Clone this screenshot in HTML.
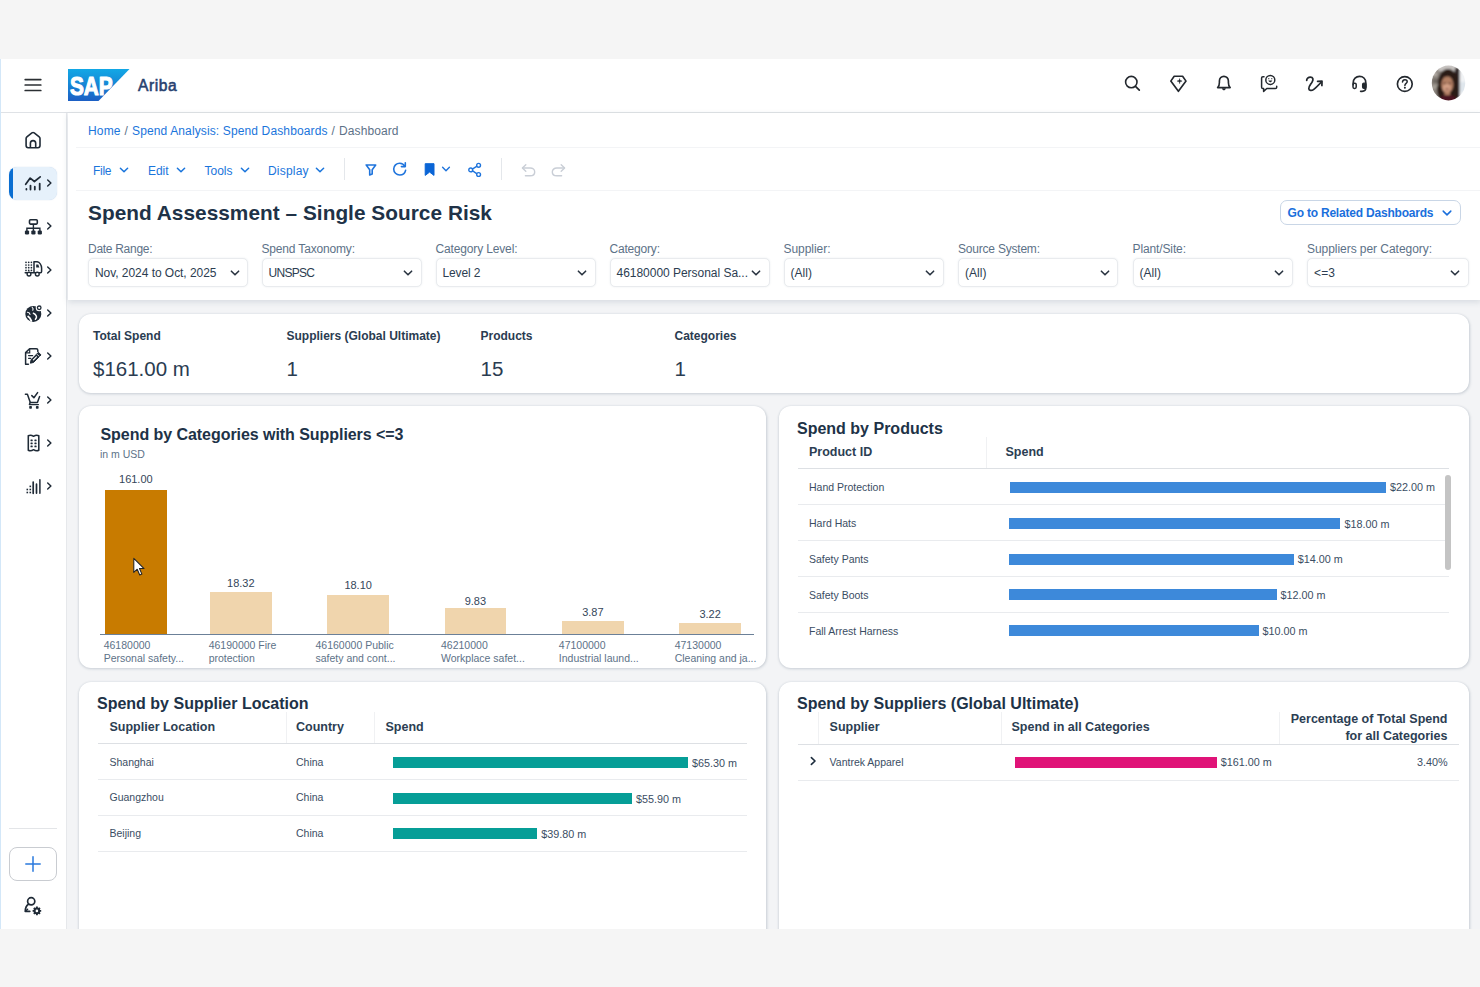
<!DOCTYPE html>
<html lang="en"><head><meta charset="utf-8"><title>SAP Ariba – Spend Assessment – Single Source Risk</title>
<style>
html,body{margin:0;padding:0}
body{width:1480px;height:987px;background:#f5f5f5;position:relative;overflow:hidden;font-family:"Liberation Sans", Arial, sans-serif;}
#app{position:absolute;left:0;top:0;width:1480px;height:929px;overflow:hidden;background:#f3f4f6}
.t{position:absolute;white-space:nowrap;line-height:1;font-family:"Liberation Sans", Arial, sans-serif;}
.card{position:absolute;background:#fff;border-radius:12px;box-shadow:0 0 2px rgba(85,107,130,.16),.5px 1px 3px rgba(70,90,110,.20)}
.sel{position:absolute;background:#fff;border:1px solid #e9ebee;border-radius:5px;box-sizing:border-box;box-shadow:0 0 2px rgba(85,107,130,.12)}
.hl{position:absolute;height:1px;background:#e9ebee}
.vl{position:absolute;width:1px;background:#f0f1f3}
</style></head><body>
<div id="app">
<div style="position:absolute;left:0px;top:58.5px;width:1480px;height:53.5px;background:#fff;"></div>
<div style="position:absolute;left:0px;top:111.5px;width:1480px;height:1.5px;background:#dfe2e6;"></div>
<div style="position:absolute;left:0px;top:113px;width:66px;height:816px;background:#fff;"></div>
<div style="position:absolute;left:66px;top:113px;width:1.2px;height:816px;background:#e6e8eb;"></div>
<div style="position:absolute;left:0px;top:58.5px;width:1.3px;height:871px;background:#d3e7f8;"></div>
<div style="position:absolute;left:67.5px;top:113px;width:1413px;height:187px;background:#fff;box-shadow:0 2px 6px rgba(85,107,130,.18);"></div>
<svg style="position:absolute;left:24px;top:76px;" width="18" height="18" viewBox="0 0 18 18" fill="none"><path d="M1.2 3.6H16.8M1.2 9H16.8M1.2 14.5H16.8" stroke="#2b2f33" stroke-width="1.7" stroke-linecap="round"/></svg>
<svg style="position:absolute;left:68px;top:69px;" width="62" height="32" viewBox="0 0 62 32" fill="none"><defs><linearGradient id="sapg" x1="0" y1="0" x2="0" y2="1"><stop offset="0" stop-color="#12a8e6"/><stop offset=".25" stop-color="#1497dd"/><stop offset="1" stop-color="#1c5fc4"/></linearGradient></defs>
<path d="M0 0H61.5L30.5 32H0Z" fill="url(#sapg)"/>
<text x="1.9" y="25.7" font-family="Liberation Sans, Arial, sans-serif" font-weight="700" font-size="26.2" fill="#fff" textLength="42.8" lengthAdjust="spacingAndGlyphs" stroke="#fff" stroke-width="1.15" stroke-linejoin="round">SAP</text></svg>
<span class="t" style="left:138.00px;top:77.79px;font-size:15.6px;color:#27416f;letter-spacing:0.545px;-webkit-text-stroke:.55px #27416f;">Ariba</span>
<svg style="position:absolute;left:1122px;top:73px;" width="20" height="20" viewBox="0 0 20 20" fill="none"><circle cx="9.3" cy="9.1" r="5.7" stroke="#23282e" stroke-width="1.6"/><path d="M13.5 13.3L17.3 17.1" stroke="#23282e" stroke-width="1.7" stroke-linecap="round"/></svg>
<svg style="position:absolute;left:1168px;top:73px;" width="22" height="22" viewBox="0 0 22 22" fill="none"><path d="M6.2 3.2H14.6L18 8.1L10.4 18.3L2.8 8.1Z" stroke="#23282e" stroke-width="1.65" stroke-linejoin="round"/><path d="M11.6 5.6C11.8 7.4 12.3 7.9 14.1 8.1C12.3 8.3 11.8 8.8 11.6 10.6C11.4 8.8 10.9 8.3 9.1 8.1C10.9 7.9 11.4 7.4 11.6 5.6Z" fill="#23282e" stroke="#23282e" stroke-width=".5"/></svg>
<svg style="position:absolute;left:1213px;top:73px;" width="22" height="22" viewBox="0 0 22 22" fill="none"><path d="M4.6 14.6H17.2C15.6 13.4 15.4 12 15.4 9.4V8C15.4 5.2 13.4 3.3 10.9 3.3C8.4 3.3 6.4 5.2 6.4 8V9.4C6.4 12 6.2 13.4 4.6 14.6Z" stroke="#23282e" stroke-width="1.65" stroke-linejoin="round"/><path d="M8.9 15.2C9.3 16.6 10 17.2 10.9 17.2C11.8 17.2 12.5 16.6 12.9 15.2Z" fill="#23282e"/></svg>
<svg style="position:absolute;left:1258px;top:72px;" width="22" height="22" viewBox="0 0 22 22" fill="none"><path d="M6 4.7H4.9C4.1 4.7 3.6 5.3 3.6 6V15.2C3.6 15.9 4.1 16.5 4.9 16.5H5.6V19.4L8.8 16.5H17.4C18.2 16.500 18.7 15.9 18.7 15.2V14.2" stroke="#23282e" stroke-width="1.5" stroke-linecap="round" stroke-linejoin="round"/><circle cx="12.3" cy="7.9" r="4.5" stroke="#23282e" stroke-width="1.5"/><path d="M10.3 8.6C10.8 9.9 11.6 10.2 12.3 10.2C13 10.2 13.8 9.9 14.3 8.6Z" fill="#23282e"/><circle cx="10.8" cy="6.7" r=".6" fill="#23282e"/><circle cx="13.8" cy="6.7" r=".6" fill="#23282e"/></svg>
<svg style="position:absolute;left:1303px;top:73px;" width="22" height="22" viewBox="0 0 22 22" fill="none"><path d="M3.700 7.400C3.500 5.800 5.300 4 7.400 4C10 4 10.600 6.400 9.200 8.900C7.800 11.400 5.600 13.400 5.800 15.600C6 17.800 8.600 18.100 10.800 16.400C13.200 14.500 15.800 11.800 18.400 9" stroke="#23282e" stroke-width="1.750" stroke-linecap="round" stroke-linejoin="round"/><path d="M14.600 8.300L19 8.200L18.900 12.500" stroke="#23282e" stroke-width="1.750" stroke-linecap="round" stroke-linejoin="round"/></svg>
<svg style="position:absolute;left:1349px;top:73px;" width="22" height="22" viewBox="0 0 22 22" fill="none"><path d="M4.2 11.8V9.800C4.2 5.9 7 3.4 10.500 3.4C14 3.4 16.8 5.9 16.8 9.800V14.8C16.8 17 15.400 18.3 13 18.3H11.6" stroke="#23282e" stroke-width="1.65" stroke-linecap="round" stroke-linejoin="round"/><rect x="4" y="10.200" width="3.200" height="5.200" rx="1.3" stroke="#23282e" stroke-width="1.5"/><rect x="13.600" y="10.200" width="3.400" height="5.200" rx="1.3" fill="#23282e" stroke="#23282e" stroke-width="1.3"/></svg>
<svg style="position:absolute;left:1394px;top:72.5px;" width="22" height="22" viewBox="0 0 22 22" fill="none"><circle cx="10.800" cy="11" r="7.400" stroke="#23282e" stroke-width="1.65"/><path d="M8.500 9C8.600 7.600 9.600 6.800 10.900 6.800C12.200 6.800 13.200 7.600 13.200 8.800C13.200 10.400 10.900 10.500 10.900 12.400" stroke="#23282e" stroke-width="1.5" stroke-linecap="round"/><circle cx="10.900" cy="14.800" r="1" fill="#23282e"/></svg>
<svg style="position:absolute;left:1430px;top:64px;" width="37" height="38" viewBox="0 0 37 38" fill="none"><defs><clipPath id="avc"><ellipse cx="18.5" cy="19" rx="16.700" ry="17.400"/></clipPath><filter id="avb" x="-10%" y="-10%" width="120%" height="120%"><feGaussianBlur stdDeviation=".85"/></filter><filter id="ave" x="-10%" y="-10%" width="120%" height="120%"><feGaussianBlur stdDeviation=".35"/></filter></defs>
<g filter="url(#ave)"><g clip-path="url(#avc)"><g filter="url(#avb)"><rect x="-2" y="-2" width="42" height="42" fill="#8a837d"/><rect x="2" y="8" width="5" height="4" fill="#b3aca4"/><rect x="3" y="15" width="5" height="4" fill="#6d6660"/><rect x="2" y="21" width="6" height="4" fill="#a39c94"/><rect x="8" y="-2" width="18" height="9" fill="#c6c2c0"/><rect x="28.500" y="-2" width="12" height="42" fill="#f1f3f5"/><rect x="30" y="18" width="8" height="10" fill="#dfe6ec"/>
<path d="M25 4H29.500V34H24Z" fill="#2a2123"/>
<ellipse cx="18" cy="19.500" rx="10.200" ry="14.500" fill="#2b1a16"/><path d="M7 22C6.500 28 8 33 10 36H27C28.500 32 29 27 28.500 22Z" fill="#2b1a16"/>
<ellipse cx="17.300" cy="20.600" rx="6" ry="8.300" fill="#b27f64"/><ellipse cx="16.800" cy="24" rx="4" ry="4.200" fill="#d29f84"/><ellipse cx="14.600" cy="19.300" rx="1.700" ry=".9" fill="#6b4637"/><ellipse cx="19.800" cy="19.300" rx="1.700" ry=".9" fill="#6b4637"/><ellipse cx="17.100" cy="25.300" rx="2.300" ry=".75" fill="#8a5648"/><rect x="14.500" y="27.500" width="5.500" height="4" fill="#b07e64"/>
<path d="M12 13.500C13.500 9.500 20 8.500 23 13C20 11.800 15.500 11.800 12 13.500Z" fill="#2b1a16"/>
<path d="M8 40C9 32.500 13 30.600 17.500 31.200C22.500 30.600 27 32.500 28.500 40Z" fill="#4c1820"/></g></g></g></svg>
<div style="position:absolute;left:9.3px;top:166.5px;width:47.5px;height:33px;border-radius:8px;background:#e6f1fb;overflow:hidden;box-shadow:0 0 1px rgba(120,160,210,.5)"><div style="position:absolute;left:0;top:0;width:3.3px;height:33px;background:#0a6ed1"></div></div>
<svg style="position:absolute;left:24px;top:130.5px;" width="18" height="18" viewBox="0 0 18 18" fill="none"><path d="M2.1 7.6C2.1 6.9 2.4 6.3 2.9 5.9L7.9 1.9C8.6 1.4 9.5 1.4 10.2 1.9L15.2 5.9C15.7 6.3 16 6.9 16 7.6V14.6C16 15.8 15.1 16.7 13.9 16.7H4.2C3 16.7 2.1 15.8 2.1 14.6Z" stroke="#1f2a36" stroke-width="1.6" stroke-linejoin="round"/><path d="M6.4 16.6V12.3C6.4 10.8 7.6 9.6 9.05 9.6C10.5 9.6 11.7 10.8 11.7 12.3V16.6" stroke="#1f2a36" stroke-width="1.6"/></svg>
<svg style="position:absolute;left:24px;top:174px;" width="19" height="18" viewBox="0 0 19 18" fill="none"><path d="M1.700 10.300L6.200 4.100L10.400 7.500L16.200 2.900" stroke="#1f2a36" stroke-width="1.750" stroke-linecap="round" stroke-linejoin="round"/><path d="M2.400 15V15.600M6.500 11.600V15.600M10.800 12.700V15.600M15.700 9.600V15.600" stroke="#1f2a36" stroke-width="1.800" stroke-linecap="round"/></svg>
<svg style="position:absolute;left:43px;top:177.2px;" width="12" height="12" viewBox="0 0 12 12" fill="none"><path d="M4.700 2.900L7.900 6L4.700 9.100" stroke="#1f2a36" stroke-width="1.450" stroke-linecap="round" stroke-linejoin="round"/></svg>
<svg style="position:absolute;left:23.5px;top:217.5px;" width="19" height="18" viewBox="0 0 19 18" fill="none"><rect x="5.500" y="1.800" width="7.800" height="4.300" rx="1" stroke="#1f2a36" stroke-width="1.600"/><path d="M9.4 6.200V10M2.9 13V10.2H15.9V13M9.4 10V13" stroke="#1f2a36" stroke-width="1.4"/><rect x="0.9" y="12.4" width="4.2" height="4" rx="1.2" fill="#1f2a36"/><rect x="7.3" y="12.4" width="4.2" height="4" rx="1.2" fill="#1f2a36"/><rect x="13.7" y="12.4" width="4.2" height="4" rx="1.2" fill="#1f2a36"/></svg>
<svg style="position:absolute;left:43px;top:220.4px;" width="12" height="12" viewBox="0 0 12 12" fill="none"><path d="M4.700 2.900L7.900 6L4.700 9.100" stroke="#1f2a36" stroke-width="1.450" stroke-linecap="round" stroke-linejoin="round"/></svg>
<svg style="position:absolute;left:23.5px;top:259.9px;" width="19" height="18" viewBox="0 0 19 18" fill="none"><g fill="#1f2a36"><circle cx="2" cy="2.3" r=".85"/><circle cx="4.7" cy="2.3" r=".85"/><circle cx="7.4" cy="2.3" r=".85"/><circle cx="2" cy="5" r=".85"/><circle cx="4.7" cy="5" r=".85"/><circle cx="7.4" cy="5" r=".85"/><circle cx="2" cy="7.7" r=".85"/><circle cx="4.7" cy="7.7" r=".85"/><circle cx="7.4" cy="7.7" r=".85"/><circle cx="2" cy="10.4" r=".85"/><circle cx="4.7" cy="10.4" r=".85"/><circle cx="7.4" cy="10.4" r=".85"/></g><path d="M10 1.8H13.2C15.6 2.3 17.4 5.2 17.6 8V11.6C17.6 12.3 17.2 12.7 16.5 12.7H1.2" stroke="#1f2a36" stroke-width="1.5" stroke-linecap="round" stroke-linejoin="round"/><path d="M10 1.8V12.4" stroke="#1f2a36" stroke-width="1.5"/><path d="M12.2 4.6H14.3L15.4 7.4H12.2Z" fill="#1f2a36"/><circle cx="5" cy="14.1" r="1.9" fill="#fff" stroke="#1f2a36" stroke-width="1.4"/><circle cx="13.3" cy="14.1" r="1.9" fill="#fff" stroke="#1f2a36" stroke-width="1.4"/></svg>
<svg style="position:absolute;left:43px;top:263.7px;" width="12" height="12" viewBox="0 0 12 12" fill="none"><path d="M4.700 2.900L7.900 6L4.700 9.100" stroke="#1f2a36" stroke-width="1.450" stroke-linecap="round" stroke-linejoin="round"/></svg>
<svg style="position:absolute;left:23.5px;top:303.5px;" width="19" height="19" viewBox="0 0 19 19" fill="none"><circle cx="9.300" cy="9.900" r="8" fill="#1f2a36"/><path d="M4.200 12.600C5.600 13.600 6.600 15 7.300 16.800" stroke="#fff" stroke-width="1.900" stroke-linecap="round"/><path d="M3.400 8.200C4.800 8.400 5.800 9.200 6 10.400" stroke="#fff" stroke-width="1.100" stroke-linecap="round"/><path d="M9.400 9.200C10.800 9.600 11.800 10.600 12.400 12.200C12.800 13.400 12.200 14.400 11.400 15.200" stroke="#fff" stroke-width="1.500" stroke-linecap="round"/><path d="M8.200 3.400C9.200 4.200 9.400 5.200 8.800 6.200" stroke="#fff" stroke-width="1.100" stroke-linecap="round"/><circle cx="15.200" cy="3.800" r="3.500" fill="#fff"/><circle cx="15.200" cy="3.800" r="1.800" stroke="#1f2a36" stroke-width="1.300"/></svg>
<svg style="position:absolute;left:43px;top:307px;" width="12" height="12" viewBox="0 0 12 12" fill="none"><path d="M4.700 2.900L7.900 6L4.700 9.100" stroke="#1f2a36" stroke-width="1.450" stroke-linecap="round" stroke-linejoin="round"/></svg>
<svg style="position:absolute;left:23.5px;top:347px;" width="19" height="19" viewBox="0 0 19 19" fill="none"><path d="M1.6 17V5.6L5.6 1.7H12.3C13.2 1.7 13.8 2.3 13.8 3.2V4.4" stroke="#1f2a36" stroke-width="1.5" stroke-linecap="round" stroke-linejoin="round"/><path d="M1.6 17.3H4.4" stroke="#1f2a36" stroke-width="1.5" stroke-linecap="round"/><path d="M1.8 5.9H5.7V2" stroke="#1f2a36" stroke-width="1.2"/><path d="M4.6 8.6H8.6M4.6 11.3H6.8" stroke="#1f2a36" stroke-width="1.3" stroke-linecap="round"/><path d="M14.4 5.3L17 7.9L9.6 15.4L6.4 16.2L7.1 12.8Z" fill="#1f2a36" stroke="#1f2a36" stroke-width="1" stroke-linejoin="round"/><path d="M13 7.2L15.2 9.4" stroke="#fff" stroke-width=".9"/><path d="M12.400 9.800L9.400 12.900" stroke="#fff" stroke-width="1.200" stroke-linecap="round"/></svg>
<svg style="position:absolute;left:43px;top:350.2px;" width="12" height="12" viewBox="0 0 12 12" fill="none"><path d="M4.700 2.900L7.900 6L4.700 9.100" stroke="#1f2a36" stroke-width="1.450" stroke-linecap="round" stroke-linejoin="round"/></svg>
<svg style="position:absolute;left:23.5px;top:390.5px;" width="19" height="19" viewBox="0 0 19 19" fill="none"><path d="M1.4 3.3H3.4L6.3 11.4H13.4L15.6 5.6" stroke="#1f2a36" stroke-width="1.5" stroke-linecap="round" stroke-linejoin="round"/><path d="M6.2 11.4L5.4 13.6H14.4" stroke="#1f2a36" stroke-width="1.4" stroke-linecap="round" stroke-linejoin="round"/><path d="M7.8 4.6L9.9 6.7L13.6 1.6" stroke="#1f2a36" stroke-width="1.5" stroke-linecap="round" stroke-linejoin="round"/><rect x="5.2" y="15" width="2.7" height="2.7" rx=".7" fill="#1f2a36"/><rect x="11.9" y="15" width="2.7" height="2.7" rx=".7" fill="#1f2a36"/></svg>
<svg style="position:absolute;left:43px;top:393.7px;" width="12" height="12" viewBox="0 0 12 12" fill="none"><path d="M4.700 2.900L7.900 6L4.700 9.100" stroke="#1f2a36" stroke-width="1.450" stroke-linecap="round" stroke-linejoin="round"/></svg>
<svg style="position:absolute;left:23.5px;top:434px;" width="19" height="19" viewBox="0 0 19 19" fill="none"><path d="M4.300 1.700C6 .9 7.700 1.100 9.550 2.300C11.400 1.100 13.100 .9 14.800 1.700V16.300C13.100 17.100 11.400 16.900 9.550 15.700C7.700 16.900 6 17.100 4.300 16.300Z" stroke="#1f2a36" stroke-width="1.550" stroke-linejoin="round"/><g fill="#1f2a36"><rect x="6.500" y="5.500" width="2.200" height="1.700" rx=".4"/><rect x="10.400" y="5.500" width="2.200" height="1.700" rx=".4"/><rect x="6.500" y="8.500" width="2.200" height="1.700" rx=".4"/><rect x="10.400" y="8.500" width="2.200" height="1.700" rx=".4"/><rect x="6.500" y="11.600" width="2.200" height="1.700" rx=".4"/><rect x="10.400" y="11.600" width="2.200" height="1.700" rx=".4"/></g></svg>
<svg style="position:absolute;left:43px;top:437.2px;" width="12" height="12" viewBox="0 0 12 12" fill="none"><path d="M4.700 2.900L7.900 6L4.700 9.100" stroke="#1f2a36" stroke-width="1.450" stroke-linecap="round" stroke-linejoin="round"/></svg>
<svg style="position:absolute;left:23.5px;top:477.5px;" width="19" height="18" viewBox="0 0 19 18" fill="none"><path d="M15.900 1.800V15.300" stroke="#1f2a36" stroke-width="1.500" stroke-linecap="round"/><path d="M12.500 6.200V15.100M9.200 4V15.300" stroke="#1f2a36" stroke-width="1.700" stroke-linecap="round"/><g fill="#1f2a36"><rect x="5.500" y="7.600" width="1.600" height="1.600"/><rect x="5.500" y="10.700" width="1.600" height="1.600"/><rect x="5.500" y="13.700" width="1.600" height="1.600"/><rect x="2.500" y="10.700" width="1.600" height="1.600"/><rect x="2.500" y="13.700" width="1.600" height="1.600"/></g></svg>
<svg style="position:absolute;left:43px;top:480.3px;" width="12" height="12" viewBox="0 0 12 12" fill="none"><path d="M4.700 2.900L7.900 6L4.700 9.100" stroke="#1f2a36" stroke-width="1.450" stroke-linecap="round" stroke-linejoin="round"/></svg>
<div style="position:absolute;left:9px;top:827.5px;width:47.5px;height:1px;background:#e3e5e8;"></div>
<div style="position:absolute;left:9px;top:846.5px;width:48px;height:34.5px;box-sizing:border-box;border:1px solid #c9ccd1;border-radius:8px;background:#fff;"></div>
<svg style="position:absolute;left:24px;top:855px;" width="18" height="18" viewBox="0 0 18 18" fill="none"><path d="M9 1.8V16.2M1.8 9H16.2" stroke="#2a79dd" stroke-width="1.5" stroke-linecap="round"/></svg>
<svg style="position:absolute;left:23px;top:896px;" width="20" height="20" viewBox="0 0 20 20" fill="none"><circle cx="8.2" cy="5.3" r="3.6" stroke="#1f2a36" stroke-width="1.7"/><path d="M5.5 8.300C3.300 9.700 2.300 12 2.300 15.300H6.800" stroke="#1f2a36" stroke-width="1.700" stroke-linecap="round" stroke-linejoin="round"/><path d="M4.600 13.300L2.500 15.200" stroke="#1f2a36" stroke-width="1.500" stroke-linecap="round"/><g transform="translate(13.900 14.900)"><circle r="2.300" stroke="#1f2a36" stroke-width="2"/><path d="M0 -4.300V-2.800M0 4.300V2.800M-4.300 0H-2.800M4.300 0H2.800M-3.040 -3.040L-2 -2M3.040 3.040L2 2M-3.040 3.040L-2 2M3.040 -3.040L2 -2" stroke="#1f2a36" stroke-width="1.900"/></g></svg>
<span class="t" style="left:88.00px;top:124.84px;font-size:12px;color:#1a75dc;letter-spacing:0.163px;">Home</span>
<span class="t" style="left:124.50px;top:124.84px;font-size:12px;color:#5d7288;">/</span>
<span class="t" style="left:132.00px;top:124.84px;font-size:12px;color:#1a75dc;letter-spacing:0.130px;">Spend Analysis: Spend Dashboards</span>
<span class="t" style="left:331.50px;top:124.84px;font-size:12px;color:#5d7288;">/</span>
<span class="t" style="left:339.00px;top:124.84px;font-size:12px;color:#5d7288;letter-spacing:0.099px;">Dashboard</span>
<div class="hl" style="left:76px;top:147px;width:1404px;background:#f3f4f6"></div>
<span class="t" style="left:93.00px;top:164.84px;font-size:12px;color:#1a75dc;letter-spacing:-0.279px;">File</span>
<svg style="position:absolute;left:117.5px;top:163.5px;" width="12" height="12" viewBox="0 0 12 12" fill="none"><path d="M2.4 4.2L6 7.8L9.6 4.2" stroke="#1a75dc" stroke-width="1.5" stroke-linecap="round" stroke-linejoin="round"/></svg>
<span class="t" style="left:148.00px;top:164.84px;font-size:12px;color:#1a75dc;letter-spacing:-0.059px;">Edit</span>
<svg style="position:absolute;left:174.5px;top:163.5px;" width="12" height="12" viewBox="0 0 12 12" fill="none"><path d="M2.4 4.2L6 7.8L9.6 4.2" stroke="#1a75dc" stroke-width="1.5" stroke-linecap="round" stroke-linejoin="round"/></svg>
<span class="t" style="left:204.50px;top:164.84px;font-size:12px;color:#1a75dc;letter-spacing:-0.004px;">Tools</span>
<svg style="position:absolute;left:238.5px;top:163.5px;" width="12" height="12" viewBox="0 0 12 12" fill="none"><path d="M2.4 4.2L6 7.8L9.6 4.2" stroke="#1a75dc" stroke-width="1.5" stroke-linecap="round" stroke-linejoin="round"/></svg>
<span class="t" style="left:268.00px;top:164.84px;font-size:12px;color:#1a75dc;letter-spacing:0.192px;">Display</span>
<svg style="position:absolute;left:314px;top:163.5px;" width="12" height="12" viewBox="0 0 12 12" fill="none"><path d="M2.4 4.2L6 7.8L9.6 4.2" stroke="#1a75dc" stroke-width="1.5" stroke-linecap="round" stroke-linejoin="round"/></svg>
<div class="vl" style="left:344px;top:158px;height:22px;background:#e4e7eb"></div>
<div class="vl" style="left:501px;top:158px;height:22px;background:#e4e7eb"></div>
<svg style="position:absolute;left:362px;top:160.5px;" width="18" height="18" viewBox="0 0 18 18" fill="none"><path d="M4.2 4H13.7L10.2 8.700V13L7.700 14V8.700Z" stroke="#1f74dc" stroke-width="1.6" stroke-linejoin="round"/></svg>
<svg style="position:absolute;left:390px;top:160px;" width="19" height="19" viewBox="0 0 19 19" fill="none"><path d="M14.900 6.300C13.900 4.400 12 3.200 9.700 3.200C6.400 3.200 3.700 5.800 3.700 9.100C3.700 12.400 6.400 15 9.700 15C12.600 15 15 13 15.600 10.300" stroke="#1f74dc" stroke-width="1.6" stroke-linecap="round"/><path d="M15.300 2.700V6.600H11.400" stroke="#1f74dc" stroke-width="1.6" stroke-linecap="round" stroke-linejoin="round"/></svg>
<svg style="position:absolute;left:421px;top:160px;" width="18" height="19" viewBox="0 0 18 19" fill="none"><path d="M4.200 3.700H13.000V15.400L8.600 12.100L4.200 15.400Z" fill="#0a65d6" stroke="#0a65d6" stroke-width="1" stroke-linejoin="round"/></svg>
<svg style="position:absolute;left:439.6px;top:163.2px;" width="12" height="12" viewBox="0 0 12 12" fill="none"><path d="M2.6 4.3L6 7.7L9.4 4.3" stroke="#1f74dc" stroke-width="1.4" stroke-linecap="round" stroke-linejoin="round"/></svg>
<svg style="position:absolute;left:466px;top:160.5px;" width="18" height="18" viewBox="0 0 18 18" fill="none"><path d="M11.800 4.600L5.200 8.900L11.800 13.300" stroke="#1f74dc" stroke-width="1.4" stroke-linejoin="round"/><circle cx="12.600" cy="4.300" r="1.900" fill="#fff" stroke="#1f74dc" stroke-width="1.4"/><circle cx="4.700" cy="8.900" r="1.900" fill="#fff" stroke="#1f74dc" stroke-width="1.4"/><circle cx="12.600" cy="13.500" r="1.900" fill="#fff" stroke="#1f74dc" stroke-width="1.4"/></svg>
<svg style="position:absolute;left:519px;top:160.5px;" width="19" height="18" viewBox="0 0 19 18" fill="none"><path d="M3.600 7H11.200C13.800 7 15.700 8.700 15.700 10.900C15.700 13.100 13.800 14.700 11.200 14.700H6.400" stroke="#c9ced6" stroke-width="1.4" stroke-linecap="round"/><path d="M6.800 3.800L3.400 7L6.800 10.200" stroke="#c9ced6" stroke-width="1.400" stroke-linecap="round" stroke-linejoin="round"/></svg>
<svg style="position:absolute;left:548.5px;top:160.5px;" width="19" height="18" viewBox="0 0 19 18" fill="none"><path d="M15.400 7H7.800C5.200 7 3.300 8.700 3.300 10.900C3.300 13.100 5.200 14.700 7.800 14.700H12.600" stroke="#c9ced6" stroke-width="1.400" stroke-linecap="round"/><path d="M12.200 3.800L15.600 7L12.200 10.200" stroke="#c9ced6" stroke-width="1.400" stroke-linecap="round" stroke-linejoin="round"/></svg>
<div class="hl" style="left:76px;top:190px;width:1404px;background:#f3f4f6"></div>
<span class="t" style="left:88.00px;top:202.69px;font-size:20.8px;font-weight:700;color:#203247;letter-spacing:0.037px;">Spend Assessment – Single Source Risk</span>
<div style="position:absolute;left:1280px;top:200px;width:181px;height:25px;box-sizing:border-box;border:1px solid #c9d6e6;border-radius:7px;background:#fff;"></div>
<span class="t" style="left:1287.50px;top:206.84px;font-size:12px;font-weight:700;color:#1a6fdc;letter-spacing:-0.204px;">Go to Related Dashboards</span>
<svg style="position:absolute;left:1440.6px;top:206.6px;" width="12" height="12" viewBox="0 0 12 12" fill="none"><path d="M2.2 4.1L6 7.9L9.8 4.1" stroke="#1a6fdc" stroke-width="1.5" stroke-linecap="round" stroke-linejoin="round"/></svg>
<span class="t" style="left:88.00px;top:242.84px;font-size:12px;color:#5d7288;letter-spacing:-0.288px;">Date Range:</span>
<div class="sel" style="left:88.0px;top:258px;width:160.3px;height:28.800px"></div>
<span class="t" style="left:95.00px;top:266.64px;font-size:12px;color:#2c3d51;letter-spacing:-0.049px;">Nov, 2024 to Oct, 2025</span>
<svg style="position:absolute;left:228.7px;top:266.6px;" width="12" height="12" viewBox="0 0 12 12" fill="none"><path d="M2.4 4.2L6 7.8L9.6 4.2" stroke="#2a3441" stroke-width="1.6" stroke-linecap="round" stroke-linejoin="round"/></svg>
<span class="t" style="left:261.50px;top:242.84px;font-size:12px;color:#5d7288;letter-spacing:-0.167px;">Spend Taxonomy:</span>
<div class="sel" style="left:261.5px;top:258px;width:160.3px;height:28.800px"></div>
<span class="t" style="left:268.50px;top:266.64px;font-size:12px;color:#2c3d51;letter-spacing:-0.702px;">UNSPSC</span>
<svg style="position:absolute;left:402.2px;top:266.6px;" width="12" height="12" viewBox="0 0 12 12" fill="none"><path d="M2.4 4.2L6 7.8L9.6 4.2" stroke="#2a3441" stroke-width="1.6" stroke-linecap="round" stroke-linejoin="round"/></svg>
<span class="t" style="left:435.50px;top:242.84px;font-size:12px;color:#5d7288;letter-spacing:-0.146px;">Category Level:</span>
<div class="sel" style="left:435.5px;top:258px;width:160.3px;height:28.800px"></div>
<span class="t" style="left:442.50px;top:266.64px;font-size:12px;color:#2c3d51;letter-spacing:-0.116px;">Level 2</span>
<svg style="position:absolute;left:576.2px;top:266.6px;" width="12" height="12" viewBox="0 0 12 12" fill="none"><path d="M2.4 4.2L6 7.8L9.6 4.2" stroke="#2a3441" stroke-width="1.6" stroke-linecap="round" stroke-linejoin="round"/></svg>
<span class="t" style="left:609.50px;top:242.84px;font-size:12px;color:#5d7288;letter-spacing:-0.191px;">Category:</span>
<div class="sel" style="left:609.5px;top:258px;width:160.3px;height:28.800px"></div>
<span class="t" style="left:616.50px;top:266.64px;font-size:12px;color:#2c3d51;letter-spacing:-0.027px;">46180000 Personal Sa...</span>
<svg style="position:absolute;left:750.2px;top:266.6px;" width="12" height="12" viewBox="0 0 12 12" fill="none"><path d="M2.4 4.2L6 7.8L9.6 4.2" stroke="#2a3441" stroke-width="1.6" stroke-linecap="round" stroke-linejoin="round"/></svg>
<span class="t" style="left:783.50px;top:242.84px;font-size:12px;color:#5d7288;letter-spacing:-0.045px;">Supplier:</span>
<div class="sel" style="left:783.5px;top:258px;width:160.3px;height:28.800px"></div>
<span class="t" style="left:790.50px;top:266.64px;font-size:12px;color:#2c3d51;letter-spacing:0.043px;">(All)</span>
<svg style="position:absolute;left:924.2px;top:266.6px;" width="12" height="12" viewBox="0 0 12 12" fill="none"><path d="M2.4 4.2L6 7.8L9.6 4.2" stroke="#2a3441" stroke-width="1.6" stroke-linecap="round" stroke-linejoin="round"/></svg>
<span class="t" style="left:958.00px;top:242.84px;font-size:12px;color:#5d7288;letter-spacing:-0.208px;">Source System:</span>
<div class="sel" style="left:958.0px;top:258px;width:160.3px;height:28.800px"></div>
<span class="t" style="left:965.00px;top:266.64px;font-size:12px;color:#2c3d51;letter-spacing:0.043px;">(All)</span>
<svg style="position:absolute;left:1098.7px;top:266.6px;" width="12" height="12" viewBox="0 0 12 12" fill="none"><path d="M2.4 4.2L6 7.8L9.6 4.2" stroke="#2a3441" stroke-width="1.6" stroke-linecap="round" stroke-linejoin="round"/></svg>
<span class="t" style="left:1132.50px;top:242.84px;font-size:12px;color:#5d7288;letter-spacing:-0.120px;">Plant/Site:</span>
<div class="sel" style="left:1132.5px;top:258px;width:160.3px;height:28.800px"></div>
<span class="t" style="left:1139.50px;top:266.64px;font-size:12px;color:#2c3d51;letter-spacing:0.043px;">(All)</span>
<svg style="position:absolute;left:1273.2px;top:266.6px;" width="12" height="12" viewBox="0 0 12 12" fill="none"><path d="M2.4 4.2L6 7.8L9.6 4.2" stroke="#2a3441" stroke-width="1.6" stroke-linecap="round" stroke-linejoin="round"/></svg>
<span class="t" style="left:1307.00px;top:242.84px;font-size:12px;color:#5d7288;letter-spacing:-0.049px;">Suppliers per Category:</span>
<div class="sel" style="left:1307.0px;top:258px;width:161.5px;height:28.800px"></div>
<span class="t" style="left:1314.00px;top:266.64px;font-size:12px;color:#2c3d51;letter-spacing:0.155px;">&lt;=3</span>
<svg style="position:absolute;left:1449.1px;top:266.6px;" width="12" height="12" viewBox="0 0 12 12" fill="none"><path d="M2.4 4.2L6 7.8L9.6 4.2" stroke="#2a3441" stroke-width="1.6" stroke-linecap="round" stroke-linejoin="round"/></svg>
<div class="card" style="left:78.5px;top:313.8px;width:1390.5px;height:79.5px"></div>
<span class="t" style="left:93.00px;top:329.84px;font-size:12px;font-weight:700;color:#2a3c51;">Total Spend</span>
<span class="t" style="left:93.00px;top:358.65px;font-size:20.5px;color:#2a3c51;">$161.00 m</span>
<span class="t" style="left:286.50px;top:329.84px;font-size:12px;font-weight:700;color:#2a3c51;">Suppliers (Global Ultimate)</span>
<span class="t" style="left:286.50px;top:358.65px;font-size:20.5px;color:#2a3c51;">1</span>
<span class="t" style="left:480.50px;top:329.84px;font-size:12px;font-weight:700;color:#2a3c51;">Products</span>
<span class="t" style="left:480.50px;top:358.65px;font-size:20.5px;color:#2a3c51;">15</span>
<span class="t" style="left:674.50px;top:329.84px;font-size:12px;font-weight:700;color:#2a3c51;">Categories</span>
<span class="t" style="left:674.50px;top:358.65px;font-size:20.5px;color:#2a3c51;">1</span>
<div class="card" style="left:78.5px;top:406px;width:687.5px;height:262px"></div>
<div class="card" style="left:779px;top:406px;width:690px;height:262px"></div>
<div class="card" style="left:78.5px;top:682px;width:687.5px;height:300px"></div>
<div class="card" style="left:779px;top:682px;width:690px;height:300px"></div>
<span class="t" style="left:100.50px;top:427.46px;font-size:16px;font-weight:700;color:#203247;letter-spacing:-0.053px;">Spend by Categories with Suppliers &lt;=3</span>
<span class="t" style="left:100.00px;top:448.61px;font-size:10.5px;color:#5d7288;">in m USD</span>
<div style="position:absolute;left:105px;top:490px;width:61.7px;height:144.3px;background:#c87b00;"></div>
<span class="t" style="left:119.03px;top:473.69px;font-size:11px;color:#34465a;">161.00</span>
<div style="position:absolute;left:210px;top:592px;width:61.6px;height:42.3px;background:#f0d5ad;"></div>
<span class="t" style="left:227.04px;top:578.19px;font-size:11px;color:#34465a;">18.32</span>
<div style="position:absolute;left:327.3px;top:595px;width:61.7px;height:39.3px;background:#f0d5ad;"></div>
<span class="t" style="left:344.39px;top:580.19px;font-size:11px;color:#34465a;">18.10</span>
<div style="position:absolute;left:444.5px;top:608px;width:61.7px;height:26.3px;background:#f0d5ad;"></div>
<span class="t" style="left:464.65px;top:595.69px;font-size:11px;color:#34465a;">9.83</span>
<div style="position:absolute;left:562px;top:621px;width:61.7px;height:13.3px;background:#f0d5ad;"></div>
<span class="t" style="left:582.15px;top:606.69px;font-size:11px;color:#34465a;">3.87</span>
<div style="position:absolute;left:679.2px;top:623px;width:61.8px;height:11.3px;background:#f0d5ad;"></div>
<span class="t" style="left:699.40px;top:609.19px;font-size:11px;color:#34465a;">3.22</span>
<div style="position:absolute;left:100px;top:633.8px;width:654px;height:1.2px;background:#6b8098;"></div>
<span class="t" style="left:103.70px;top:640.11px;font-size:10.5px;color:#5d7288;">46180000</span>
<span class="t" style="left:103.70px;top:652.91px;font-size:10.5px;color:#5d7288;">Personal safety...</span>
<span class="t" style="left:208.70px;top:640.11px;font-size:10.5px;color:#5d7288;">46190000 Fire</span>
<span class="t" style="left:208.70px;top:652.91px;font-size:10.5px;color:#5d7288;">protection</span>
<span class="t" style="left:315.50px;top:640.11px;font-size:10.5px;color:#5d7288;">46160000 Public</span>
<span class="t" style="left:315.50px;top:652.91px;font-size:10.5px;color:#5d7288;">safety and cont...</span>
<span class="t" style="left:441.00px;top:640.11px;font-size:10.5px;color:#5d7288;">46210000</span>
<span class="t" style="left:441.00px;top:652.91px;font-size:10.5px;color:#5d7288;">Workplace safet...</span>
<span class="t" style="left:558.80px;top:640.11px;font-size:10.5px;color:#5d7288;">47100000</span>
<span class="t" style="left:558.80px;top:652.91px;font-size:10.5px;color:#5d7288;">Industrial laund...</span>
<span class="t" style="left:674.70px;top:640.11px;font-size:10.5px;color:#5d7288;">47130000</span>
<span class="t" style="left:674.70px;top:652.91px;font-size:10.5px;color:#5d7288;">Cleaning and ja...</span>
<svg style="position:absolute;left:132.2px;top:556.8px;" width="15" height="20" viewBox="0 0 15 20" fill="none"><g transform="scale(.9)"><path d="M2 1.5V17.2L5.8 13.6L8.6 20L11 19L8.3 12.8H13.4Z" fill="#fff" stroke="#222" stroke-width="1.150" stroke-linejoin="round"/></g></svg>
<span class="t" style="left:797.00px;top:421.46px;font-size:16px;font-weight:700;color:#203247;">Spend by Products</span>
<span class="t" style="left:809.00px;top:446.12px;font-size:12.5px;font-weight:700;color:#2c3e53;">Product ID</span>
<span class="t" style="left:1005.50px;top:446.12px;font-size:12.5px;font-weight:700;color:#2c3e53;">Spend</span>
<div class="vl" style="left:986px;top:437px;height:31px"></div>
<div class="hl" style="left:798px;top:468px;width:651px;background:#dde0e4"></div>
<span class="t" style="left:809.00px;top:481.71px;font-size:10.5px;color:#3a4d63;">Hand Protection</span>
<div style="position:absolute;left:1010px;top:481.9px;width:376px;height:11.2px;background:#3d89da;"></div>
<span class="t" style="left:1390.00px;top:481.96px;font-size:10.8px;color:#3a4d63;">$22.00 m</span>
<div class="hl" style="left:798px;top:504.4px;width:651px"></div>
<span class="t" style="left:809.00px;top:518.31px;font-size:10.5px;color:#3a4d63;">Hard Hats</span>
<div style="position:absolute;left:1009.3px;top:517.7px;width:331.1px;height:11.2px;background:#3d89da;"></div>
<span class="t" style="left:1344.40px;top:518.56px;font-size:10.8px;color:#3a4d63;">$18.00 m</span>
<div class="hl" style="left:798px;top:540.2px;width:651px"></div>
<span class="t" style="left:809.00px;top:554.11px;font-size:10.5px;color:#3a4d63;">Safety Pants</span>
<div style="position:absolute;left:1009.3px;top:553.5px;width:284.4px;height:11.2px;background:#3d89da;"></div>
<span class="t" style="left:1297.70px;top:554.36px;font-size:10.8px;color:#3a4d63;">$14.00 m</span>
<div class="hl" style="left:798px;top:576.0px;width:651px"></div>
<span class="t" style="left:809.00px;top:589.91px;font-size:10.5px;color:#3a4d63;">Safety Boots</span>
<div style="position:absolute;left:1008.7px;top:589.3px;width:267.9px;height:11.2px;background:#3d89da;"></div>
<span class="t" style="left:1280.60px;top:590.16px;font-size:10.8px;color:#3a4d63;">$12.00 m</span>
<div class="hl" style="left:798px;top:611.8px;width:651px"></div>
<span class="t" style="left:809.00px;top:625.51px;font-size:10.5px;color:#3a4d63;">Fall Arrest Harness</span>
<div style="position:absolute;left:1008.7px;top:625.1px;width:249.9px;height:11.2px;background:#3d89da;"></div>
<span class="t" style="left:1262.60px;top:625.76px;font-size:10.8px;color:#3a4d63;">$10.00 m</span>
<div style="position:absolute;left:1444.5px;top:475px;width:6.3px;height:95px;background:#c4c4c4;border-radius:3px;"></div>
<span class="t" style="left:97.00px;top:695.96px;font-size:16px;font-weight:700;color:#203247;">Spend by Supplier Location</span>
<span class="t" style="left:109.50px;top:720.82px;font-size:12.5px;font-weight:700;color:#2c3e53;">Supplier Location</span>
<span class="t" style="left:296.00px;top:720.82px;font-size:12.5px;font-weight:700;color:#2c3e53;">Country</span>
<span class="t" style="left:385.50px;top:720.82px;font-size:12.5px;font-weight:700;color:#2c3e53;">Spend</span>
<div class="vl" style="left:286px;top:712px;height:31px"></div>
<div class="vl" style="left:374px;top:712px;height:31px"></div>
<div class="hl" style="left:98px;top:743px;width:649px;background:#dde0e4"></div>
<span class="t" style="left:109.50px;top:756.61px;font-size:10.5px;color:#3a4d63;">Shanghai</span>
<span class="t" style="left:296.00px;top:756.61px;font-size:10.5px;color:#3a4d63;">China</span>
<div style="position:absolute;left:393.4px;top:756.7px;width:294.6px;height:11.1px;background:#069e97;"></div>
<span class="t" style="left:692.00px;top:757.86px;font-size:10.8px;color:#3a4d63;">$65.30 m</span>
<div class="hl" style="left:98px;top:779.0px;width:649px"></div>
<span class="t" style="left:109.50px;top:791.91px;font-size:10.5px;color:#3a4d63;">Guangzhou</span>
<span class="t" style="left:296.00px;top:791.91px;font-size:10.5px;color:#3a4d63;">China</span>
<div style="position:absolute;left:392.9px;top:792.55px;width:239.1px;height:11.1px;background:#069e97;"></div>
<span class="t" style="left:636.00px;top:793.86px;font-size:10.8px;color:#3a4d63;">$55.90 m</span>
<div class="hl" style="left:98px;top:814.9px;width:649px"></div>
<span class="t" style="left:109.50px;top:828.11px;font-size:10.5px;color:#3a4d63;">Beijing</span>
<span class="t" style="left:296.00px;top:828.11px;font-size:10.5px;color:#3a4d63;">China</span>
<div style="position:absolute;left:392.6px;top:828.4px;width:144.6px;height:11.1px;background:#069e97;"></div>
<span class="t" style="left:541.20px;top:829.46px;font-size:10.8px;color:#3a4d63;">$39.80 m</span>
<div class="hl" style="left:98px;top:850.8px;width:649px"></div>
<span class="t" style="left:797.00px;top:696.46px;font-size:16px;font-weight:700;color:#203247;">Spend by Suppliers (Global Ultimate)</span>
<span class="t" style="left:829.60px;top:721.22px;font-size:12.5px;font-weight:700;color:#2c3e53;">Supplier</span>
<span class="t" style="left:1011.50px;top:721.22px;font-size:12.5px;font-weight:700;color:#2c3e53;">Spend in all Categories</span>
<span class="t" style="right:32.50px;top:712.92px;font-size:12.5px;font-weight:700;color:#2c3e53;">Percentage of Total Spend</span>
<span class="t" style="right:32.50px;top:729.92px;font-size:12.5px;font-weight:700;color:#2c3e53;">for all Categories</span>
<div class="vl" style="left:818px;top:712px;height:32px"></div>
<div class="vl" style="left:1000.5px;top:712px;height:32px"></div>
<div class="vl" style="left:1279px;top:712px;height:32px"></div>
<div class="hl" style="left:798px;top:743.5px;width:661px;background:#dde0e4"></div>
<svg style="position:absolute;left:807px;top:755px;" width="12" height="12" viewBox="0 0 12 12" fill="none"><path d="M4.4 2.6L8 6L4.4 9.4" stroke="#1d2d3e" stroke-width="1.6" stroke-linecap="round" stroke-linejoin="round"/></svg>
<span class="t" style="left:829.60px;top:756.91px;font-size:10.5px;color:#3a4d63;">Vantrek Apparel</span>
<div style="position:absolute;left:1014.8px;top:757.1px;width:202.5px;height:11.3px;background:#e01378;"></div>
<span class="t" style="left:1220.70px;top:757.16px;font-size:10.8px;color:#3a4d63;">$161.00 m</span>
<span class="t" style="right:32.50px;top:756.86px;font-size:10.8px;color:#3a4d63;">3.40%</span>
<div class="hl" style="left:798px;top:779.5px;width:661px"></div>
<div style="position:absolute;left:0px;top:0px;width:1480px;height:58.5px;background:#f5f5f5;"></div>
</div>
</body></html>
